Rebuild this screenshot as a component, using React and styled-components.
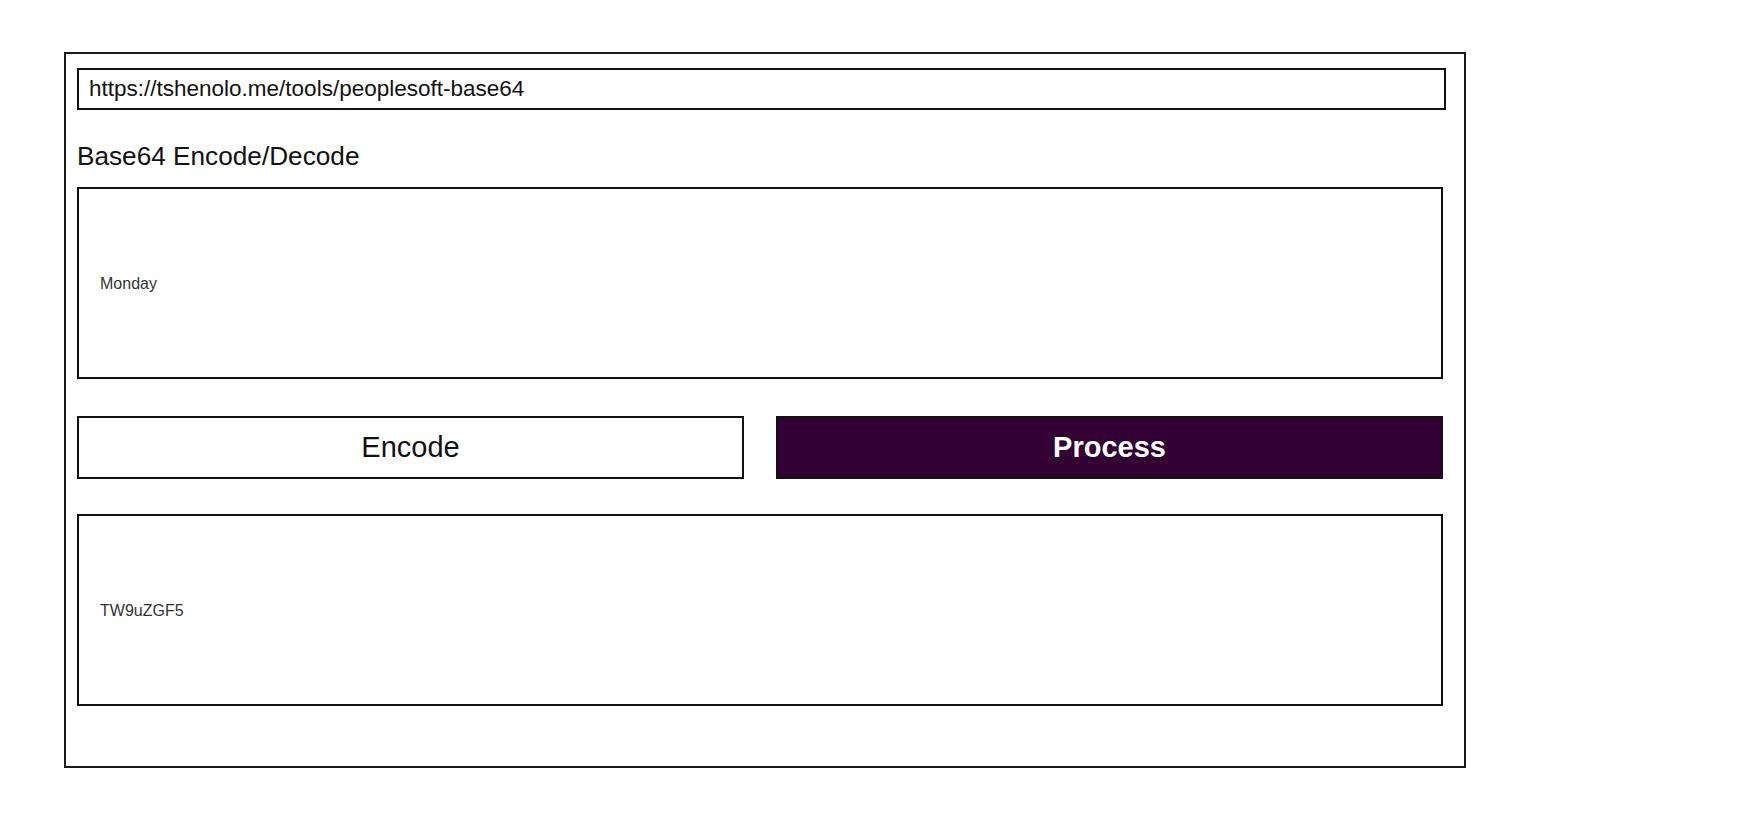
import React from "react";
import styled, { createGlobalStyle } from "styled-components";

const GlobalStyle = createGlobalStyle`
  body {
    margin: 0;
    background: #ffffff;
    font-family: "Liberation Sans", Arial, sans-serif;
    color: #111;
  }
`;

const App = () => {
  return (
    <>
      <GlobalStyle />
      <Page>
        <Frame>
          <UrlBar>https://tshenolo.me/tools/peoplesoft-base64</UrlBar>
          <Heading>Base64 Encode/Decode</Heading>
          <TextBox>Monday</TextBox>
          <ButtonRow>
            <ModeButton>Encode</ModeButton>
            <ProcessButton>Process</ProcessButton>
          </ButtonRow>
          <TextBox>TW9uZGF5</TextBox>
        </Frame>
      </Page>
    </>
  );
};

export default App;

const Page = styled.div`
  padding: 52px 0 0 64px;
`;

const Frame = styled.div`
  box-sizing: border-box;
  width: 1402px;
  height: 716px;
  border: 2px solid #1a1a1a;
  padding: 14px 20px 0 11px;
  display: flex;
  flex-direction: column;
`;

const UrlBar = styled.div`
  box-sizing: border-box;
  width: 1369px;
  height: 42px;
  border: 2px solid #111;
  padding: 0 10px;
  display: flex;
  align-items: center;
  font-size: 22.5px;
  color: #111;
`;

const Heading = styled.h1`
  margin: 31px 0 0 0;
  font-size: 26.2px;
  line-height: 30px;
  font-weight: normal;
  color: #111;
`;

const TextBox = styled.div`
  box-sizing: border-box;
  width: 1366px;
  height: 192px;
  margin-top: 16px;
  border: 2px solid #111;
  padding: 2px 21px 0;
  display: flex;
  align-items: center;
  font-size: 16px;
  color: #333;

  & + div {
    margin-top: 37px;
  }
`;

const ButtonRow = styled.div`
  width: 1366px;
  display: grid;
  grid-template-columns: 1fr 1fr;
  gap: 32px;

  & + div {
    margin-top: 35px;
  }
`;

const ModeButton = styled.div`
  box-sizing: border-box;
  height: 63px;
  border: 2px solid #111;
  background: #ffffff;
  display: flex;
  align-items: center;
  justify-content: center;
  font-size: 29px;
  color: #111;
`;

const ProcessButton = styled(ModeButton)`
  background: #330033;
  color: #ffffff;
  font-weight: bold;
`;
